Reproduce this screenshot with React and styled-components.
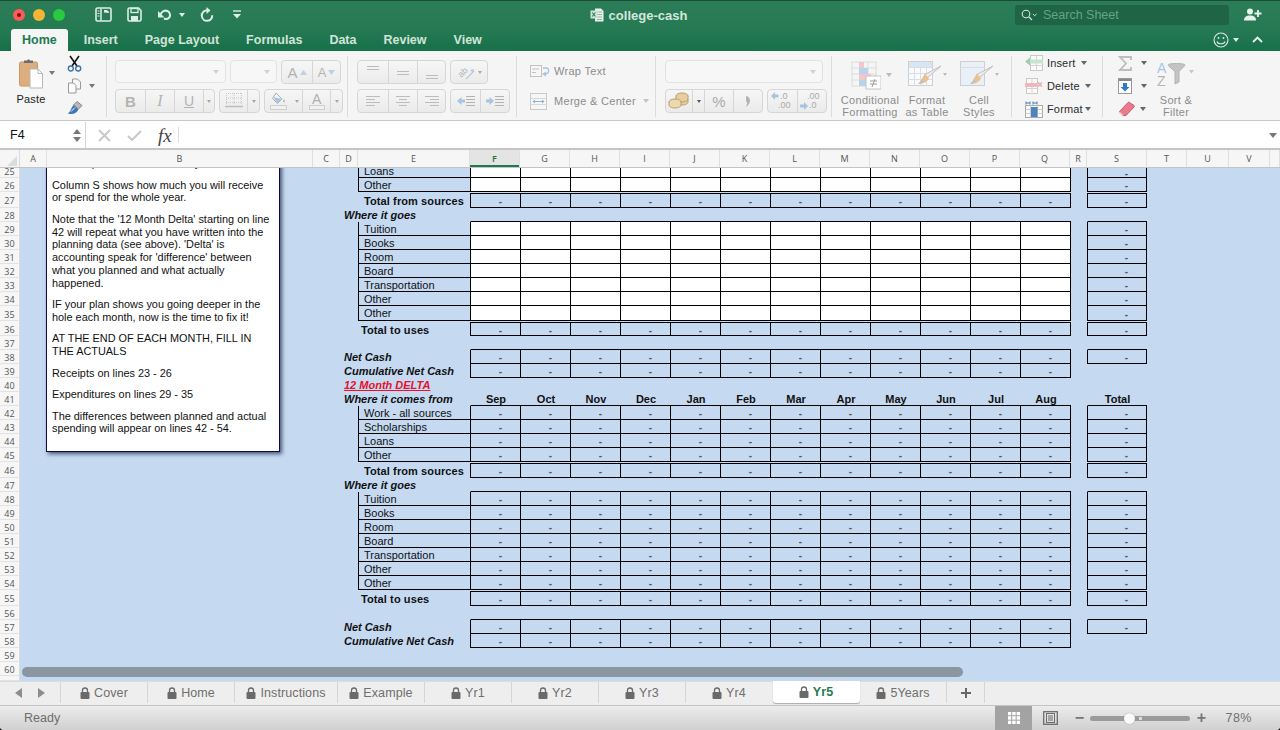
import React from "react";
import styled, { createGlobalStyle } from "styled-components";

const Global = createGlobalStyle`
  html, body { margin: 0; padding: 0; background: #10180f; }
  * { box-sizing: border-box; }
`;
const SANS = `"Liberation Sans", Arial, sans-serif`;
const UI = `"Open Sans", "Noto Sans", sans-serif`;
const RIBBON_GRAY = "#8c8c8c";

const Shell = styled.div`
  width: 1280px; height: 730px; overflow: hidden; display: flex; flex-direction: column;
  font-family: ${SANS}; background: #f5f5f5; border-radius: 0 0 4px 4px;
`;
const Gap = styled.span`display: block; flex: none; width: ${p => p.$w}px;`;
/* ---------- title ---------- */
const TitleBar = styled.header`
  height: 28px; flex: none; display: grid; grid-template-columns: 1fr auto 1fr; align-items: center;
  background: linear-gradient(#2b7d58, #267a53); border-top: 1px solid #1c4a33;
`;
const TitleLeft = styled.div`display: flex; align-items: center; padding-left: 13px;`;
const Light = styled.span`
  width: 12px; height: 12px; border-radius: 50%; margin-right: 8px; background: ${p => p.$c};
  display: flex; align-items: center; justify-content: center;
`;
const LightDot = styled.span`width: 4px; height: 4px; border-radius: 50%; background: #7d1010;`;
const Qat = styled.div`display: flex; align-items: center; margin-left: 22px;`;
const DocTitle = styled.div`
  display: flex; align-items: center; gap: 5px; color: #d3e6dc; font-size: 13px; font-weight: 700;
  margin-left: -3px; margin-top: 1px;
`;
const TitleRight = styled.div`display: flex; align-items: center; justify-content: flex-end; padding-right: 18px; gap: 15px;`;
const SearchBox = styled.div`
  width: 214px; height: 20px; border-radius: 3px; background: #1f6445; display: flex; align-items: center;
  padding-left: 6px; gap: 6px; color: #62a585; font-size: 12.5px;
`;
/* ---------- tabs ---------- */
const TabStrip = styled.nav`
  height: 23px; flex: none; display: flex; align-items: stretch; gap: 27px; padding-left: 11px;
  background: linear-gradient(#267a53, #16704a); position: relative;
`;
const RibbonTab = styled.div`
  font-size: 12.5px; font-weight: 700; line-height: 24px; color: ${p => p.$active ? "#217a50" : "#d2e4da"};
  ${p => p.$active && `background:#f5f5f5; padding:0 11px; margin-right:-11px; border-radius:3px 3px 0 0; margin-top:1px; line-height:23px;`}
`;
const TabTools = styled.div`
  position: absolute; right: 17px; top: 0; height: 23px; display: flex; align-items: center; gap: 4px;
`;
/* ---------- ribbon ---------- */
const Ribbon = styled.section`
  height: 70px; display: flex; background: #f5f5f5; border-bottom: 1px solid #c9c9c9; flex: none;
`;
const Group = styled.div`
  width: ${p => p.$w}px; margin: 5px 0 3px; padding: ${p => p.$pt ?? 4}px 0 0 ${p => p.$pl || 8}px; flex: none;
  border-right: ${p => p.$last ? "none" : "1px solid #dcdcdc"}; display: flex; flex-direction: ${p => p.$row ? "row" : "column"};
  gap: ${p => p.$row ? 0 : (p.$gap ?? 5)}px;
`;
const ToolRow = styled.div`display: flex; gap: 4px; height: 24px;`;
const Field = styled.div`
  width: ${p => p.$w}px; height: 23px; border: 1px solid #e2e2e2; border-radius: 4px; background: #f7f7f7;
  display: flex; justify-content: flex-end; align-items: center; padding-right: 6px;
`;
const Seg = styled.div`
  display: flex; height: 24px; border: 1px solid #d6d6d6; border-radius: 4px; overflow: hidden;
  background: linear-gradient(#f6f6f6, #ebebeb);
`;
const SegBtn = styled.div`
  width: ${p => p.$w}px; display: flex; align-items: center; justify-content: center; gap: 2px;
  border-left: ${p => p.$plain ? "none" : "1px solid #d6d6d6"}; color: #b3b3b3;
  &:first-child { border-left: none; }
`;
const Glyph = styled.span`
  font-family: ${p => p.$serif ? `"Liberation Serif", serif` : SANS}; font-size: ${p => p.$s || 14}px;
  font-weight: ${p => p.$b ? 700 : 400}; font-style: ${p => p.$i ? "italic" : "normal"};
  text-decoration: ${p => p.$u ? "underline" : "none"}; color: ${p => p.$c || "#b3b3b3"}; line-height: 1;
`;
const Tri = styled.i`
  display: block; flex: none; width: 0; height: 0; border-left: ${p => p.$s || 3}px solid transparent; border-right: ${p => p.$s || 3}px solid transparent;
  border-top: ${p => (p.$s || 3) + 1}px solid ${p => p.$c || "#a8a8a8"};
  margin-top: ${p => p.$mt || 0}px; margin-left: ${p => p.$ml || 0}px; margin-right: ${p => p.$mr || 0}px;
`;
const PasteCol = styled.div`display: flex; flex-direction: column; align-items: center; width: 46px; margin-top: -2px;`;
const RibbonDark = styled.div`font-size: 11px; color: #222; letter-spacing: .2px; margin-top: 4px; line-height: 13px;`;
const Stack = styled.div`
  display: flex; flex-direction: column; justify-content: space-between; height: ${p => p.$h}px; flex: none;
  margin-top: ${p => p.$mt || 0}px; margin-left: ${p => p.$ml || 0}px; ${p => p.$w && `width:${p.$w}px;`}
`;
const StackItem = styled.div`display: flex; align-items: center; gap: ${p => p.$gap ?? 4}px; height: 20px;`;
const FlatRow = styled.div`display: flex; align-items: center; height: 24px; gap: ${p => p.$g || 7}px;`;
const MutedLabel = styled.span`font-size: 11px; color: ${RIBBON_GRAY}; letter-spacing: .3px;`;
const StyleBtn = styled.div`
  width: ${p => p.$w}px; flex: none; display: flex; flex-direction: column; align-items: center; padding-top: ${p => p.$pt || 0}px;
`;
const StyleIcon = styled.div`height: ${p => p.$h || 33}px; flex: none; display: flex; align-items: flex-start; gap: 2px; margin-left: ${p => p.$ml || 0}px;`;
const StyleLabel = styled.div`font-size: 11px; line-height: 12px; color: ${RIBBON_GRAY}; text-align: center; letter-spacing: .3px;`;
const CellLabel = styled.span`font-size: 11px; color: #2c2c2c; letter-spacing: .15px; width: ${p => p.$w}px;`;
/* ---------- formula ---------- */
const FormulaBar = styled.div`
  height: 29px; flex: none; display: flex; align-items: center; background: #fff; border-bottom: 2px solid #c6c6c6; padding-top: 1px;
`;
const NameBox = styled.div`
  width: 86px; height: 100%; border-right: 1px solid #d5d5d5; display: flex; align-items: center; justify-content: space-between;
  padding: 0 4px 0 10px; font-size: 12.5px; color: #111;
`;
const Spinner = styled.div`display: flex; flex-direction: column; gap: 3px;`;
const TriUp = styled.i`display: block; width: 0; height: 0; border-left: 4px solid transparent; border-right: 4px solid transparent; border-bottom: 5px solid #777;`;
const FxTools = styled.div`display: flex; align-items: center; gap: 16px; padding-left: 12px; flex: 1;`;
const FxDivider = styled.span`width: 1px; height: 16px; background: #ddd; margin-left: -10px;`;
/* ---------- sheet ---------- */
const COLS = "20px 27px 266px 27px 18px 112px 51px repeat(11, 50px) 16px 60px 1fr";
const HeadRow = styled.div`
  height: 18px; flex: none; display: grid; background: #f6f6f6; border-bottom: 1px solid #c4c4c4;
  grid-template-columns: 20px 27px 266px 27px 18px 112px 50px repeat(11, 50px) 17px 60px 40px 42px 41px 1fr;
`;
const Corner = styled.div`
  border-right: 1px solid #dadada; position: relative;
  &::after { content: ""; position: absolute; right: 2px; bottom: 1px; border-left: 10px solid transparent; border-bottom: 10px solid #dcdcdc; }
`;
const ColHead = styled.div`
  border-right: 1px solid #dfdfdf; text-align: center; font: 9px/17px ${UI}; color: ${p => p.$active ? "#1d6f48" : "#555"};
  ${p => p.$active && `background:#e4e4e4; box-shadow: inset 0 -2px 0 #1d7a50; font-weight:600;`}
`;
const SheetBody = styled.div`
  flex: 1; position: relative; overflow: hidden; background: #c5d9f1; min-height: 0;
`;
const Row = styled.div`
  display: grid; grid-template-columns: ${COLS}; height: ${p => p.$h}px; font-size: 11px; color: #111;
`;
const RowNum = styled.div`
  background: #f6f6f6; border-bottom: 1px solid #e2e2e2; border-right: 1px solid #dadada; text-align: center; color: #555;
  font: 9px/${p => p.$lh}px ${UI}; grid-column: 1; overflow: hidden;
`;
const Heading = styled.div`
  grid-column: 5 / 7; padding-left: 4px; font-weight: 700; font-style: italic; line-height: 14px; white-space: nowrap;
  ${p => p.$alert && `color:#e8102a; text-decoration: underline;`}
`;
const Label = styled.div`
  grid-column: 6; padding-left: ${p => p.$pad}px; line-height: ${p => p.$clip ? 6 : 14}px; white-space: nowrap; overflow: hidden;
  font-weight: ${p => p.$total ? 700 : 400}; letter-spacing: ${p => p.$total ? ".1px" : 0};
  ${p => p.$total && `padding-top:2px;`}
  ${p => p.$boxed && `border-left:1px solid #000; border-bottom:1px solid #000;`}
`;
const Cell = styled.div`
  grid-column: ${p => p.$col || "auto"};
  display: flex; align-items: center; justify-content: ${p => p.$month ? "center" : "flex-end"};
  padding-right: ${p => p.$month ? 0 : 18}px; overflow: hidden; color: #333;
  font-weight: ${p => p.$month ? 700 : 400};
  ${p => p.$month && `color:#111; padding-top:1px;`}
  ${p => p.$v === "white" && `background:#fff; border-right:1px solid #000; border-bottom:1px solid #000;`}
  ${p => p.$v === "blue" && `border-right:1px solid #000; border-bottom:1px solid #000;`}
  ${p => p.$v === "total" && `border-right:1px solid #000; border-bottom:1px solid #000; border-top:1px solid #000; margin-top:1px;`}
  ${p => p.$v === "lid" && `border-bottom:1px solid #000;`}
  ${p => p.$edge && `border-left:1px solid ${p.$v === "lid" ? "transparent" : "#000"};`}
`;
const Dash = styled.span`font-size: 10px; line-height: 13px; font-weight: 700; color: #555; position: relative; top: 1px;`;
const NoteBox = styled.aside`
  position: absolute; left: 46px; top: -40px; width: 234px; height: 324px; background: #fff;
  border: 1px solid #0a0a50; box-shadow: 2px 2px 4px rgba(30, 40, 70, .75);
  display: flex; flex-direction: column; justify-content: flex-end; padding: 0 8px 16px 5px; color: #111;
  font-size: 10.9px; line-height: 12.75px;
`;
const NoteP = styled.p`margin: 0 0 8.75px; white-space: nowrap; &:last-child { margin-bottom: 0; }`;
const HScroll = styled.div`
  position: absolute; left: 22px; top: 499px; width: 941px; height: 10px; border-radius: 5px; background: #8a96a0;
`;
/* ---------- bottom ---------- */
const SheetTabs = styled.div`
  height: 25px; flex: none; display: flex; background: #eeeeee; border-top: 1px solid #dcdcdc;
  border-bottom: 1px solid #c4c4c4; position: relative;
`;
const TabNav = styled.div`
  width: 61px; display: flex; align-items: center; gap: 16px; padding-left: 15px; border-right: 1px solid #d5d5d5; height: 21px;
`;
const NavArrow = styled.i`
  display: block; width: 0; height: 0; border-top: 5px solid transparent; border-bottom: 5px solid transparent;
  ${p => p.$left ? "border-right: 7px solid #8d8d8d;" : "border-left: 7px solid #8d8d8d;"}
`;
const SheetTab = styled.div`
  width: ${p => p.$w}px; height: ${p => p.$active ? 22 : 21}px; margin-top: ${p => p.$active ? -1 : 0}px;
  display: flex; align-items: center; justify-content: center; gap: 4px; font-size: 12.5px; letter-spacing: .1px;
  border-right: 1px solid ${p => p.$active || p.$before ? "transparent" : "#d5d5d5"};
  color: ${p => p.$active ? "#1f7a50" : "#6f6f6f"}; font-weight: ${p => p.$active ? 700 : 400};
  ${p => p.$active && `background:#fff; border-radius:0 0 3px 3px; box-shadow: 0 1px 1px #aaa;`}
`;
const AddTab = styled.div`
  width: 38px; height: 21px; border-right: 1px solid #d5d5d5; display: flex; align-items: center; justify-content: center;
  color: #666;
`;
const StatusBar = styled.footer`
  height: 24px; flex: none; display: flex; align-items: stretch; justify-content: space-between;
  background: linear-gradient(#ececec, #d0d0d0); padding-left: 24px; color: #6d6d6d; font-size: 12.5px; line-height: 24px;
`;
const StatusRight = styled.div`display: flex; align-items: center; padding-right: 28px;`;
const ViewBtn = styled.div`
  width: 37px; height: 24px; display: flex; align-items: center; justify-content: center; background: ${p => p.$active ? "#a3a3a3" : "transparent"};
`;
const ZoomBar = styled.div`display: flex; align-items: center; gap: 6px; margin-left: 5px;`;
const ZoomSign = styled.span`font-size: 16px; font-weight: 700; color: #777; line-height: 20px; width: 10px; text-align: center;`;
const ZoomTrack = styled.div`width: 100px; height: 5px; border-radius: 3px; background: #9b9b9b; position: relative;`;
const ZoomMark = styled.span`position: absolute; left: 49px; top: 1px; width: 3px; height: 3px; background: #ddd;`;
const ZoomKnob = styled.span`
  position: absolute; left: 34px; top: -3px; width: 11px; height: 11px; border-radius: 50%; background: #fafafa; box-shadow: 0 0 1px #777;
`;
const ZoomValue = styled.span`margin-left: 19px; letter-spacing: .5px; color: #707070;`;

/* ---------- icons ---------- */
const SvgBase = styled.svg`display: block; flex: none;`;
const Svg = ({ w, h, children }) => <SvgBase width={w} height={h} viewBox={`0 0 ${w} ${h}`} fill="none">{children}</SvgBase>;
const WHITE = "#dceee5";
const SidebarIcon = () => <Svg w={17} h={15}><rect x="1" y="1" width="15" height="13" rx="1.5" stroke={WHITE} strokeWidth="1.6"/><path d="M6 1.500v12" stroke={WHITE} strokeWidth="1.500"/><path d="M2.500 4h2M2.500 6.500h2M2.500 9h2" stroke={WHITE}/><path d="M9 5.500V3h3l2 2v1z" fill={WHITE}/></Svg>;
const SaveIcon = () => <Svg w={15} h={15}><path d="M1 2.500C1 1.700 1.700 1 2.500 1h9L14 3.500v9c0 .8-.7 1.500-1.500 1.500h-10C1.700 14 1 13.300 1 12.500z" stroke={WHITE} strokeWidth="1.600"/><rect x="4" y="1.500" width="7" height="4" stroke={WHITE} strokeWidth="1.300"/><rect x="4" y="9" width="7" height="5" fill={WHITE}/></Svg>;
const UndoIcon = () => <Svg w={16} h={14}><path d="M3 7.500c1.500-4.500 5-5.500 7.500-4.500 3 1.200 3.500 6 .5 7.500-1.500.7-3 .5-4 0" stroke={WHITE} strokeWidth="2"/><path d="M1 3l6.500 6.500H1z" fill={WHITE}/></Svg>;
const RedoIcon = () => <Svg w={14} h={16}><path d="M8 3.200C4 3 1.500 6 1.800 9c.3 3.200 3 5 5.600 4.800 3-.2 5-2.600 4.800-5.600" stroke={WHITE} strokeWidth="2"/><path d="M6.500 0v7l4-3.500z" fill={WHITE}/></Svg>;
const QatMenu = () => <Svg w={10} h={9}><path d="M1 1h8" stroke={WHITE} strokeWidth="1.400"/><path d="M1 4h8L5 8.500z" fill={WHITE}/></Svg>;
const XlDoc = () => <Svg w={14} h={14}><path d="M5 .5h6l2.500 2.500v10.500H5z" fill="#e9f1ec"/><path d="M7 4h5M7 6.500h5M7 9h5M7 11.500h5" stroke="#8fb3a0"/><rect x=".5" y="2.500" width="7" height="8" fill="#cfe3d9"/><path d="M2.200 4.500l3.200 4M5.400 4.500l-3.200 4" stroke="#2b7d58" strokeWidth="1.100"/></Svg>;
const SearchGlass = () => <Svg w={16} h={12}><circle cx="5" cy="5" r="3.800" stroke="#d3e6dc" strokeWidth="1.100"/><path d="M8 8l3 3" stroke="#d3e6dc" strokeWidth="1.200"/><path d="M12 5l1.700 1.700L15.500 5" stroke="#d3e6dc"/></Svg>;
const PersonAdd = () => <Svg w={18} h={13}><circle cx="6" cy="3.500" r="3" fill="#e8f2ed"/><path d="M0 12.500c0-3.500 2-5 6-5s6 1.500 6 5z" fill="#e8f2ed"/><path d="M14 2v7M10.500 5.500h7" stroke="#e8f2ed" strokeWidth="1.800"/></Svg>;
const Smile = () => <Svg w={16} h={16}><circle cx="8" cy="8" r="7" stroke="#dbeae2" strokeWidth="1.100"/><circle cx="5.500" cy="6" r=".9" fill="#dbeae2"/><circle cx="10.500" cy="6" r=".9" fill="#dbeae2"/><path d="M4 9.500c1 3 7 3 8 0" stroke="#dbeae2" strokeWidth="1.100"/></Svg>;
const Chevron = () => <Svg w={11} h={7}><path d="M1 6l4.500-4.500L10 6" stroke="#e8f2ed" strokeWidth="1.800"/></Svg>;
const PasteIcon = () => <Svg w={24} h={31}><rect x="0.500" y="4" width="18" height="24" rx="1.500" fill="#dcae7e" stroke="#c8976a"/><path d="M5 5V2.500h3C8 1 11 1 11 2.500h3V5z" fill="#6e6e6e"/><path d="M11 11h8l4.500 4.500V30H11z" fill="#fff" stroke="#b9b9b9"/><path d="M19 11v4.500h4.500" stroke="#b9b9b9"/></Svg>;
const Scissors = () => <Svg w={15} h={17}><path d="M3 1l7 10M12 1L5 11" stroke="#111" strokeWidth="1.600"/><circle cx="3.800" cy="13.500" r="2.500" stroke="#3a6ea5" strokeWidth="1.300"/><circle cx="11.200" cy="13.500" r="2.500" stroke="#3a6ea5" strokeWidth="1.300"/></Svg>;
const CopyIcon = () => <Svg w={15} h={16}><path d="M5.500 1h5l3 3v7h-8z" fill="#f8f8f8" stroke="#999"/><path d="M1.500 5h5l2.500 2.500V15H1.500z" fill="#fbfbfb" stroke="#999"/></Svg>;
const BrushIcon = () => <Svg w={17} h={16}><path d="M10 1.500l5 4-3.500 3.500-5-4z" fill="#b9b9b9" stroke="#888"/><path d="M6.500 5L11.500 9.500C10 13 6 15 1 13.500 3.500 11.500 4 8 6.500 5z" fill="#3f78b4"/><path d="M8 7.500l-4 4" stroke="#fff"/></Svg>;
const GrowA = ({ up }) => <><Glyph $s={up ? 15 : 13}>A</Glyph><Svg w={7} h={5}><path d={up ? "M0 5h7L3.500 0z" : "M0 0h7L3.500 5z"} fill="#bcd0e6"/></Svg></>;
const Lines = ({ d }) => <Svg w={16} h={16}>{d.map((y, i) => <path key={i} d={`M${y[1]} ${y[0] + 0.5}H${y[2]}`} stroke="#bcbcbc"/>)}</Svg>;
const Orient = () => <Svg w={20} h={16}><text x="2" y="12" fontSize="9" fill="#b5b5b5" fontFamily="Liberation Sans" transform="rotate(-45 6 9)">ab</text><path d="M10 15l8-8" stroke="#b9c9dc" strokeWidth="1.200"/><path d="M18 5l-1 4-3-3z" fill="#b9c9dc"/></Svg>;
const BordersIcon = () => <Svg w={18} h={18}><path d="M1 1.500h16M1 6h16M1 10.500h16M1.500 1v11M9 1v11M16.500 1v11" stroke="#c9c9c9" strokeDasharray="1 1"/><path d="M0 14.500h18" stroke="#bdbdbd" strokeWidth="1.400"/></Svg>;
const FillIcon = () => <Svg w={17} h={18}><path d="M6 1l6 6-4.500 4.500-5-5z" fill="#f2f2f2" stroke="#b0b0b0"/><path d="M3 5l9 2-4.500 4.500z" fill="#a9c5e2"/><path d="M14 7c1.200 2 1.500 3 0 3.500-1.500-.5-1.200-1.500 0-3.500z" fill="#bcbcbc"/><rect x=".5" y="13.500" width="16" height="4" fill="#f1f1f1" stroke="#cfcfcf"/></Svg>;
const ColorA = () => <Svg w={16} h={18}><text x="3" y="12" fontSize="14" fill="#b0b0b0" fontFamily="Liberation Sans">A</text><rect x=".5" y="13.500" width="15" height="4" fill="#f1f1f1" stroke="#cfcfcf"/></Svg>;
const IndentIcon = ({ dir }) => <Svg w={18} h={12}><path d="M9 1.500h9M9 4.500h9M9 7.500h9M9 10.500h9" stroke="#b3b3b3"/><path d={dir < 0 ? "M0 6l4.500-4v2.500H8v3H4.500V10z" : "M8 6L3.500 2v2.500H0v3h3.500V10z"} fill="#a9c5e2"/></Svg>;
const WrapIcon = () => <Svg w={20} h={14}><rect x=".5" y="1.500" width="11" height="11" fill="#f6f6f6" stroke="#c2c2c2"/><path d="M2 5h7M2 8.500h4" stroke="#c2c2c2"/><path d="M13 4h3c4 0 3.500 6-1 6" stroke="#a6c3e0" strokeWidth="1.300"/><path d="M12 10l4-2.500v5z" fill="#a6c3e0"/></Svg>;
const MergeIcon = () => <Svg w={17} h={17}><rect x=".5" y=".5" width="16" height="16" fill="#f6f6f6" stroke="#c9c9c9"/><path d="M.5 5.500h16M.5 11.500h16" stroke="#d8d8d8"/><path d="M3.500 8.500h10" stroke="#8fb1d4"/><path d="M2.500 8.500l2.500-2v4zM14.500 8.500l-2.500-2v4z" fill="#8fb1d4"/></Svg>;
const Coins = () => <Svg w={22} h={18}><ellipse cx="14" cy="4" rx="6" ry="3" fill="#e6cf9f" stroke="#b99e6c"/><path d="M8 4v6c0 1.700 2.700 3 6 3s6-1.300 6-3V4" fill="#e6cf9f" stroke="#b99e6c"/><path d="M8 7c0 1.700 2.700 3 6 3s6-1.300 6-3" stroke="#b99e6c"/><ellipse cx="7" cy="10" rx="6" ry="3" fill="#ecd9b0" stroke="#b99e6c"/><path d="M1 10v3c0 1.700 2.700 3 6 3s6-1.300 6-3v-3" fill="#ecd9b0" stroke="#b99e6c"/></Svg>;
const CommaIcon = () => <Svg w={9} h={13}><path d="M2 1c5 .5 6 8-.5 11 2.300-3 1.800-5 .5-6" fill="#b3b3b3"/></Svg>;
const Dec = ({ more }) => <Svg w={26} h={20}><text x={more ? 10 : 8} y="8" fontSize="9" fontFamily="Liberation Sans" fill="#aaa">{more ? ".0" : ".00"}</text><text x={more ? 8 : 10} y="17" fontSize="9" fontFamily="Liberation Sans" fill="#aaa">{more ? ".00" : ".0"}</text><path d={more ? "M1 5l4-4v2.500h3.500v3H5V9z" : "M9 15l-4-4v2.500H1v3h4V19z"} fill="#a6c3e0"/></Svg>;
const CondIcon = () => <Svg w={30} h={30}><path d="M.5 1h25M.5 7h25M.5 13h25M.5 19h25M.5 25h25M1 1v24M9 1v24M17 1v24M25 1v24" stroke="#dcdcdc"/><rect x="8" y="1" width="5" height="6" fill="#f0c8cc"/><rect x="8" y="7" width="9" height="6" fill="#bad3ec"/><rect x="8" y="13" width="12" height="6" fill="#f0c8cc"/><rect x="8" y="19" width="7" height="6" fill="#bad3ec"/><rect x="15" y="15" width="15" height="13" fill="#fff" stroke="#c3c3c3"/><path d="M19 20h7M19 23h7M21 26l3-8" stroke="#9a9a9a"/></Svg>;
const TableBrush = ({ top }) => <Svg w={35} h={29}><rect x=".5" y=".5" width="24" height="24" fill={top ? "#fafafa" : "#eaf0f8"} stroke="#cfcfcf"/>{top ? <path d="M.5 6.500h24M.5 12.500h24M.5 18.500h24M6.500 0v25M12.500 0v25M18.500 0v25" stroke="#d6dde6"/> : <path d="M.5 6.500h24" stroke="#d6dde6"/>}{top && <rect x="1" y="1" width="23" height="5" fill="#d8e5f3"/>}<path d="M33 5L19 17l-3-3z" fill="#eee" stroke="#c0c0c0"/><path d="M17 13l4 4c-1.500 4-6 6-11 6 3-2 4-7 7-10z" fill="#e9c28e"/><path d="M10 23c2-.2 4-1 5.500-2.500L14 19z" fill="#a9c5e2"/></Svg>;
const InsertIcon = () => <Svg w={18} h={16}><rect x="5.500" y=".5" width="12" height="15" fill="#fafafa" stroke="#c9c9c9"/><path d="M5.500 5.500h12M5.500 10.500h12M11.500 0v16" stroke="#d4d4d4"/><rect x="2" y="4.500" width="16" height="4" fill="#c7e4cf"/><path d="M0 6.500l5-4v8z" fill="#9ecfae"/></Svg>;
const DeleteIcon = () => <Svg w={18} h={16}><rect x="1.500" y=".5" width="11" height="15" fill="#fafafa" stroke="#c9c9c9"/><path d="M1.500 5.500h11M1.500 10.500h11M7 0v16" stroke="#d4d4d4"/><rect x="0" y="5" width="12" height="4" fill="#f0b7bf"/><path d="M13 4.500l4 4M17 4.500l-4 4" stroke="#eaa2ac" strokeWidth="1.200"/></Svg>;
const FormatIcon = () => <Svg w={18} h={17}><path d="M1 .5v3M5 .5v3M1 2h4M8 .5v3M12 .5v3M8 2h4" stroke="#4a7fb5"/><rect x=".5" y="4.500" width="17" height="12" fill="#fafafa" stroke="#aaa"/><path d="M.5 8.500h17M.5 12.500h17M5.500 4v12M12.500 4v12" stroke="#ccc"/><rect x="6" y="6" width="6.500" height="10" fill="#4a85bd"/></Svg>;
const Sigma = () => <Svg w={14} h={15}><path d="M1 1h12v3M13 1H2l6 6.500L2 14h11v-3" stroke="#bdbdbd" strokeWidth="1.800"/></Svg>;
const FillDown = () => <Svg w={14} h={16}><rect x=".5" y=".5" width="13" height="15" fill="#fff" stroke="#9a9a9a"/><rect x="1" y="1" width="12" height="2" fill="#8a8a8a"/><path d="M5 5h4v4h2.500L7 13.500 2.500 9H5z" fill="#2f7cc4"/></Svg>;
const Eraser = () => <Svg w={17} h={16}><path d="M1 11L10 1.500c.5-.5 1-.5 1.500 0l4.500 3c.5.500.5 1 0 1.500L8 14.500H4.500z" fill="#ea7b8e" stroke="#c95a6f"/><path d="M1 11l4 3.500" stroke="#f7c8d0" strokeWidth="1.500"/></Svg>;
const SortIcon = () => <Svg w={40} h={28}><text x="1" y="13" fontSize="14" fill="#a8c6e4" fontFamily="Liberation Sans">A</text><text x="1" y="26" fontSize="14" fill="#b5b5b5" fontFamily="Liberation Sans">Z</text><path d="M12 5c0-2 17-2 17 0 0 1-6 6-6 7v10l-4 2V12c0-1-7-6-7-7z" fill="#c4c4c4" stroke="#b2b2b2"/><path d="M33 10h5l-2.500 3.500z" fill="#c4c4c4"/></Svg>;
const Lock = ({ c = "#6a6a6a" }) => <Svg w={10} h={12}><path d="M2.500 5V3.500a2.500 2.500 0 015 0V5" stroke={c} strokeWidth="1.300"/><rect x="0.500" y="5" width="9" height="7" rx="1" fill={c}/></Svg>;
const GridView = () => <Svg w={14} h={14}><path d="M0 0h14v14H0z" fill="#fdfdfd"/><path d="M0 .5h14M0 4.700h14M0 9.200h14M0 13.500h14M.5 0v14M4.700 0v14M9.200 0v14M13.500 0v14" stroke="#a3a3a3"/></Svg>;
const PageView = () => <Svg w={15} h={14}><rect x=".7" y=".7" width="13.600" height="12.600" stroke="#6e6e6e" strokeWidth="1.300"/><rect x="3.500" y="2.500" width="8" height="9" stroke="#6e6e6e"/><path d="M5 5h5M5 7h5M5 9h5" stroke="#6e6e6e"/></Svg>;
const CheckIcon = () => <Svg w={15} h={13}><path d="M1 7l4 4 9-9" stroke="#c9c9c9" strokeWidth="2"/></Svg>;
const CrossIcon = () => <Svg w={13} h={13}><path d="M1 1l11 11M12 1L1 12" stroke="#c9c9c9" strokeWidth="2"/></Svg>;

/* ---------- data ---------- */
const MONTHS = ["Sep", "Oct", "Nov", "Dec", "Jan", "Feb", "Mar", "Apr", "May", "Jun", "Jul", "Aug"];
const IDX = Array.from({ length: 12 }, (_, i) => i);
const R = (n, h, kind, text, s) => ({ n, h, kind, text, s });
const ROWS = [
  R(25, 10, "input", "Loans", "blue"), R(26, 14, "input", "Other", "blue"),
  R(27, 16, "total", "Total from sources", "total"), R(28, 14, "goes", "Where it goes", "lid"),
  ...["Tuition", "Books", "Room", "Board", "Transportation", "Other"].map((t, i) => R(29 + i, 14, "input", t, "blue")),
  R(35, 15, "input", "Other", "blue"), R(36, 15, "uses", "Total to uses", "total"),
  R(37, 14, "lidOnly", "", "lid"), R(38, 14, "net", "Net Cash", "blue"), R(39, 14, "net", "Cumulative Net Cash", ""),
  R(40, 14, "delta", "12 Month DELTA", ""), R(41, 14, "months", "Where it comes from", "month"),
  ...["Work - all sources", "Scholarships", "Loans", "Other"].map((t, i) => R(42 + i, 14, "calc", t, "blue")),
  R(46, 16, "total", "Total from sources", "total"), R(47, 14, "goes", "Where it goes", "lid"),
  ...["Tuition", "Books", "Room", "Board", "Transportation", "Other", "Other"].map((t, i) => R(48 + i, 14, "calc", t, "blue")),
  R(55, 16, "uses", "Total to uses", "total"), R(56, 14, "lidOnly", "", "lid"),
  R(57, 14, "net", "Net Cash", "blue"), R(58, 14, "net", "Cumulative Net Cash", ""),
  R(59, 14, "empty", "", ""), R(60, 14, "empty", "", ""), R("", 5, "empty", "", ""),
];

const monthCell = (kind, i) => {
  if (kind === "input") return <Cell key={i} $v="white" $edge={i === 0} />;
  if (kind === "total" || kind === "uses") return <Cell key={i} $v="total" $edge={i === 0}><Dash>-</Dash></Cell>;
  if (kind === "calc" || kind === "net") return <Cell key={i} $v="blue" $edge={i === 0}><Dash>-</Dash></Cell>;
  if (kind === "goes" || kind === "lidOnly") return <Cell key={i} $v="lid" $edge={i === 0} />;
  if (kind === "months") return <Cell key={i} $v="lid" $month $edge={i === 0}>{MONTHS[i]}</Cell>;
  return <Cell key={i} />;
};
const SheetRow = ({ r }) => {
  const hasBoxed = r.kind === "input" || r.kind === "calc";
  const headed = ["goes", "net", "delta", "months"].includes(r.kind);
  return (
    <Row $h={r.h}>
      <RowNum $lh={r.h === 10 ? 8 : r.h + 2}>{r.n}</RowNum>
      {headed ? <Heading $alert={r.kind === "delta"}>{r.text}</Heading> : null}
      {hasBoxed && <Label $boxed $clip={r.h === 10} $pad={5}>{r.text}</Label>}
      {r.kind === "total" && <Label $total $pad={6}>{r.text}</Label>}
      {r.kind === "uses" && <Label $total $pad={3}>{r.text}</Label>}
      {(r.kind === "lidOnly" || r.kind === "empty") && <Label $pad={0} />}
      {IDX.map(i => monthCell(r.kind, i))}
      {r.s === "month" && <Cell $col={20} $month $v="lid" $edge>Total</Cell>}
      {r.s && r.s !== "month" && <Cell $col={20} $v={r.s} $edge>{r.s !== "lid" && <Dash>-</Dash>}</Cell>}
    </Row>
  );
};
const TABS = [["Cover", 87], ["Home", 87], ["Instructions", 103], ["Example", 87], ["Yr1", 87], ["Yr2", 87], ["Yr3", 87], ["Yr4", 87], ["Yr5", 87], ["5Years", 87]];
const HEADS = ["A", "B", "C", "D", "E", "F", "G", "H", "I", "J", "K", "L", "M", "N", "O", "P", "Q", "R", "S", "T", "U", "V", ""];

export default function App() {
  return (
    <Shell>
      <Global />
      <TitleBar>
        <TitleLeft>
          <Light $c="#fc5b57"><LightDot /></Light><Light $c="#f8b434" /><Light $c="#2ac940" />
          <Qat>
            <SidebarIcon /><Gap $w={15} /><SaveIcon /><Gap $w={15} /><UndoIcon /><Gap $w={6} />
            <Tri $c={WHITE} /><Gap $w={15} /><RedoIcon /><Gap $w={18} /><QatMenu />
          </Qat>
        </TitleLeft>
        <DocTitle><XlDoc />college-cash</DocTitle>
        <TitleRight>
          <SearchBox><SearchGlass />Search Sheet</SearchBox>
          <PersonAdd />
        </TitleRight>
      </TitleBar>
      <TabStrip>
        <RibbonTab $active>Home</RibbonTab>
        <RibbonTab>Insert</RibbonTab><RibbonTab>Page Layout</RibbonTab><RibbonTab>Formulas</RibbonTab>
        <RibbonTab>Data</RibbonTab><RibbonTab>Review</RibbonTab><RibbonTab>View</RibbonTab>
        <TabTools><Smile /><Tri $c="#dbeae2" /><Gap $w={5} /><Chevron /></TabTools>
      </TabStrip>
      <Ribbon>
        <Group $w={107} $row>
          <PasteCol>
            <PasteIcon />
            <RibbonDark>Paste</RibbonDark>
          </PasteCol>
          <Tri $c="#777" $mt={11} $ml={-5} />
          <Stack $ml={12} $mt={-7} $h={65}>
            <StackItem><Scissors /></StackItem>
            <StackItem $gap={7}><CopyIcon /><Tri $c="#777" /></StackItem>
            <StackItem><BrushIcon /></StackItem>
          </Stack>
        </Group>
        <Group $w={241}>
          <ToolRow>
            <Field $w={111}><Tri $c="#cfcfcf" /></Field><Field $w={47}><Tri $c="#cfcfcf" /></Field>
            <Seg><SegBtn $w={30}><GrowA up /></SegBtn><SegBtn $w={28}><GrowA /></SegBtn></Seg>
          </ToolRow>
          <ToolRow>
            <Seg>
              <SegBtn $w={29}><Glyph $b $s={15}>B</Glyph></SegBtn><SegBtn $w={29}><Glyph $i $serif $s={16}>I</Glyph></SegBtn>
              <SegBtn $w={29}><Glyph $u $s={14}>U</Glyph></SegBtn><SegBtn $w={11}><Tri $s={2} /></SegBtn>
            </Seg>
            <Seg><SegBtn $w={27}><BordersIcon /></SegBtn><SegBtn $w={12}><Tri $s={2} /></SegBtn></Seg>
            <Seg>
              <SegBtn $w={26}><FillIcon /></SegBtn><SegBtn $w={11} $plain><Tri $s={2} /></SegBtn>
              <SegBtn $w={28}><ColorA /></SegBtn><SegBtn $w={12}><Tri $s={2} /></SegBtn>
            </Seg>
          </ToolRow>
        </Group>
        <Group $w={169} $pl={9}>
          <ToolRow>
            <Seg>
              <SegBtn $w={30}><Lines d={[[2, 2, 14], [5, 2, 14]]} /></SegBtn><SegBtn $w={29}><Lines d={[[7, 2, 14], [10, 2, 14]]} /></SegBtn>
              <SegBtn $w={28}><Lines d={[[11, 2, 14], [14, 2, 14]]} /></SegBtn>
            </Seg>
            <Seg><SegBtn $w={36}><Orient /><Tri $s={2} /></SegBtn></Seg>
          </ToolRow>
          <ToolRow>
            <Seg>
              <SegBtn $w={30}><Lines d={[[3, 1, 15], [6, 1, 10], [9, 1, 15], [12, 1, 10]]} /></SegBtn>
              <SegBtn $w={29}><Lines d={[[3, 1, 15], [6, 4, 12], [9, 1, 15], [12, 4, 12]]} /></SegBtn>
              <SegBtn $w={28}><Lines d={[[3, 1, 15], [6, 6, 15], [9, 1, 15], [12, 6, 15]]} /></SegBtn>
            </Seg>
            <Seg><SegBtn $w={29}><IndentIcon dir={-1} /></SegBtn><SegBtn $w={29}><IndentIcon dir={1} /></SegBtn></Seg>
          </ToolRow>
        </Group>
        <Group $w={139} $pl={13} $pt={3} $gap={6}>
          <FlatRow $g={4}><WrapIcon /><MutedLabel>Wrap Text</MutedLabel></FlatRow>
          <FlatRow><MergeIcon /><MutedLabel>Merge &amp; Center</MutedLabel><Tri $s={3} $c="#c4c4c4" /></FlatRow>
        </Group>
        <Group $w={176} $pl={9}>
          <ToolRow><Field $w={158}><Tri $c="#cfcfcf" /></Field></ToolRow>
          <ToolRow>
            <Seg>
              <SegBtn $w={26}><Coins /></SegBtn><SegBtn $w={12}><Tri $s={2} $c="#555" /></SegBtn>
              <SegBtn $w={29}><Glyph $s={15} $c="#aaa">%</Glyph></SegBtn><SegBtn $w={29}><CommaIcon /></SegBtn>
            </Seg>
            <Seg><SegBtn $w={29}><Dec more /></SegBtn><SegBtn $w={29}><Dec /></SegBtn></Seg>
          </ToolRow>
        </Group>
        <Group $w={180} $row $pl={5} $pt={5}>
          <StyleBtn $w={66}>
            <StyleIcon $ml={3}><CondIcon /><Tri $c="#bbb" $mt={12} $ml={3} /></StyleIcon>
            <StyleLabel>Conditional<br />Formatting</StyleLabel>
          </StyleBtn>
          <StyleBtn $w={48}>
            <StyleIcon><TableBrush top /><Tri $s={2} $c="#bbb" $mt={12} $ml={-2} /></StyleIcon>
            <StyleLabel>Format<br />as Table</StyleLabel>
          </StyleBtn>
          <StyleBtn $w={56}>
            <StyleIcon><TableBrush /><Tri $s={2} $c="#bbb" $mt={12} $ml={-2} /></StyleIcon>
            <StyleLabel>Cell<br />Styles</StyleLabel>
          </StyleBtn>
        </Group>
        <Group $w={91} $pl={13} $pt={0}>
          <Stack $h={66} $mt={-3}>
            <StackItem $gap={4}><InsertIcon /><CellLabel $w={30}>Insert</CellLabel><Tri $c="#666" /></StackItem>
            <StackItem $gap={4}><DeleteIcon /><CellLabel $w={34}>Delete</CellLabel><Tri $c="#666" /></StackItem>
            <StackItem $gap={4}><FormatIcon /><CellLabel $w={34}>Format</CellLabel><Tri $c="#666" /></StackItem>
          </Stack>
        </Group>
        <Group $w={177} $row $last $pl={15} $pt={0}>
          <Stack $h={66} $mt={-3} $w={36}>
            <StackItem $gap={9}><Sigma /><Tri $c="#666" /></StackItem>
            <StackItem $gap={9}><FillDown /><Tri $c="#666" /></StackItem>
            <StackItem $gap={5}><Eraser /><Tri $c="#666" /></StackItem>
          </Stack>
          <StyleBtn $w={44} $pt={4}>
            <StyleIcon $h={34}><SortIcon /></StyleIcon>
            <StyleLabel>Sort &amp;<br />Filter</StyleLabel>
          </StyleBtn>
        </Group>
      </Ribbon>
      <FormulaBar>
        <NameBox>F4<Spinner><TriUp /><Tri $s={4} $c="#777" /></Spinner></NameBox>
        <FxTools>
          <CrossIcon /><CheckIcon /><Glyph $serif $i $s={19} $c="#444">fx</Glyph><FxDivider />
        </FxTools>
        <Tri $s={4} $c="#777" $mr={3} />
      </FormulaBar>
      <HeadRow>
        <Corner />
        {HEADS.map((h, i) => <ColHead key={i} $active={h === "F"}>{h}</ColHead>)}
      </HeadRow>
      <SheetBody>
        {ROWS.map((r, i) => <SheetRow key={i} r={r} />)}
        <NoteBox>
          <NoteP>Write in planned data for every month.</NoteP>
          <NoteP>Column S shows how much you will receive<br />or spend for the whole year.</NoteP>
          <NoteP>Note that the '12 Month Delta' starting on line<br />42 will repeat what you have written into the<br />planning data (see above). 'Delta' is<br />accounting speak for 'difference' between<br />what you planned and what actually<br />happened.</NoteP>
          <NoteP>IF your plan shows you going deeper in the<br />hole each month, now is the time to fix it!</NoteP>
          <NoteP>AT THE END OF EACH MONTH, FILL IN<br />THE ACTUALS</NoteP>
          <NoteP>Receipts on lines 23 - 26</NoteP>
          <NoteP>Expenditures on lines 29 - 35</NoteP>
          <NoteP>The differences between planned and actual<br />spending will appear on lines 42 - 54.</NoteP>
        </NoteBox>
        <HScroll />
      </SheetBody>
      <SheetTabs>
        <TabNav><NavArrow $left /><NavArrow /></TabNav>
        {TABS.map(([t, w]) => (
          <SheetTab key={t} $w={w} $active={t === "Yr5"} $before={t === "Yr4"}>
            <Lock />{t}
          </SheetTab>
        ))}
        <AddTab><Svg w={12} h={12}><path d="M6 1v10M1 6h10" stroke="#666" strokeWidth="2"/></Svg></AddTab>
      </SheetTabs>
      <StatusBar>
        Ready
        <StatusRight>
          <ViewBtn $active><GridView /></ViewBtn>
          <ViewBtn><PageView /></ViewBtn>
          <ZoomBar>
            <ZoomSign>−</ZoomSign>
            <ZoomTrack><ZoomMark /><ZoomKnob /></ZoomTrack>
            <ZoomSign>+</ZoomSign>
          </ZoomBar>
          <ZoomValue>78%</ZoomValue>
        </StatusRight>
      </StatusBar>
    </Shell>
  );
}
